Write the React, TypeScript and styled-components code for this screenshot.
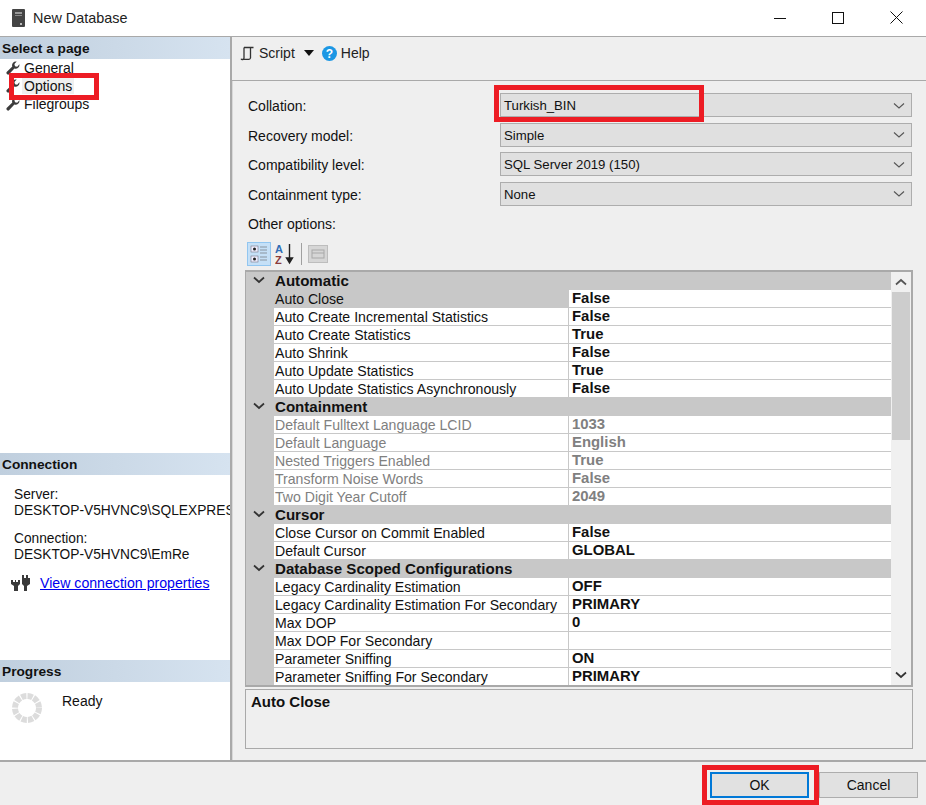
import React from "react";
import styled, { createGlobalStyle } from "styled-components";

const Global = createGlobalStyle`
  html, body { margin: 0; padding: 0; background: #fff; }
  body { font-family: "Liberation Sans", Arial, sans-serif; font-size: 14px; color: #111; }
  * { box-sizing: border-box; }
`;

const Window = styled.div`
  position: relative;
  width: 926px;
  height: 805px;
  display: flex;
  flex-direction: column;
  overflow: hidden;
`;
const TitleBar = styled.div`
  height: 37px;
  flex: none;
  display: flex;
  align-items: center;
  padding: 0 0 1px 12px;
  background: #fff;
  border-bottom: 1px solid #a9a9a9;
`;
const AppIcon = styled.svg`
  width: 13px;
  height: 18px;
  margin-right: 8px;
`;
const Title = styled.span`
  font-size: 14.4px;
  color: #222;
  flex: 1;
`;
const WinButtons = styled.div`
  display: flex;
  align-items: center;
  gap: 46px;
  padding-right: 23px;
`;
const Main = styled.div`
  flex: 1;
  display: flex;
  min-height: 0;
`;
const Side = styled.div`
  width: 232px;
  flex: none;
  display: flex;
  flex-direction: column;
  background: #fff;
  border-right: 2px solid #a9a9a9;
`;
const SideHead = styled.div`
  height: 22px;
  flex: none;
  padding: 4px 0 0 2px;
  font-weight: 700;
  font-size: 13.7px;
  line-height: 15px;
  color: #111;
  background: linear-gradient(90deg, #c0cfde, #d6e3f0);
`;
const PageList = styled.div`
  height: 394px;
  flex: none;
`;
const PageItem = styled.div`
  height: 18px;
  display: flex;
  align-items: center;
  padding-left: 6px;
  font-size: 14px;
`;
const PageIcon = styled.svg`
  width: 14px;
  height: 14px;
  margin-right: 2px;
  flex: none;
`;
const PageLabel = styled.span<{ $selected?: boolean }>`
  background: ${(p) => (p.$selected ? "#efefef" : "transparent")};
  padding: 0 2px;
  line-height: 16px;
`;
const ConnBody = styled.div`
  height: 185px;
  flex: none;
  padding: 12px 0 0 14px;
  font-size: 13.75px;
  line-height: 15.5px;
  white-space: nowrap;
  overflow: hidden;
`;
const ConnBlock = styled.div`
  margin-bottom: 13px;
`;
const ConnLink = styled.div`
  display: flex;
  align-items: center;
  margin: 3px 0 0 -3px;
  gap: 10px;
`;
const LinkText = styled.a`
  color: #0000ee;
  text-decoration: underline;
  font-size: 14.15px;
`;
const ProgressBody = styled.div`
  display: flex;
  padding: 11px 0 0 12px;
  gap: 20px;
`;
const ReadyText = styled.span`
  font-size: 14px;
  line-height: 16px;
`;
const Right = styled.div`
  flex: 1;
  display: flex;
  flex-direction: column;
  background: #efefef;
`;
const Toolbar = styled.div`
  height: 44px;
  flex: none;
  display: flex;
  align-items: flex-start;
  padding: 7px 0 0 8px;
  font-size: 14px;
  color: #222;
  border-bottom: 1px solid #a9a9a9;
  gap: 5px;
`;
const ToolItem = styled.span`
  height: 18px;
  line-height: 18px;
  display: flex;
  align-items: center;
`;
const Content = styled.div`
  flex: 1;
  padding: 12px 13px 0 12px;
  border-left: 1px solid #d8d8d8;
  display: flex;
  flex-direction: column;
`;
const FormRow = styled.div`
  height: 29.5px;
  flex: none;
  display: flex;
  align-items: flex-start;
  padding-left: 3px;
`;
const FormLabel = styled.label`
  width: 252px;
  flex: none;
  font-size: 14px;
  line-height: 26px;
  color: #111;
`;
const Combo = styled.div`
  width: 412px;
  height: 24px;
  flex: none;
  display: flex;
  align-items: center;
  justify-content: space-between;
  padding: 1px 6px 0 3px;
  background: #e0e0e0;
  border: 1px solid #adadad;
  font-size: 13.2px;
  color: #111;
`;
const OtherLabel = styled.div`
  font-size: 14px;
  line-height: 16px;
  padding: 5px 0 0 3px;
  height: 31px;
`;
const GridToolbar = styled.div`
  height: 24px;
  display: flex;
  align-items: center;
  gap: 2px;
  margin-bottom: 4px;
  padding-left: 2px;
`;
const GridBtn = styled.div<{ $active?: boolean }>`
  width: 24px;
  height: 24px;
  display: flex;
  align-items: center;
  justify-content: center;
  background: ${(p) => (p.$active ? "#c5e0f7" : "transparent")};
  border: 1px solid ${(p) => (p.$active ? "#92c6f0" : "transparent")};
`;
const GridSep = styled.div`
  width: 1px;
  height: 22px;
  background: #a0a0a0;
  margin: 0 2px;
`;
const Grid = styled.div`
  height: 417px;
  flex: none;
  width: 668px;
  display: flex;
  background: #fff;
  border-style: solid;
  border-width: 2px 2px 2px 1px;
  border-color: #a9a9a9;
  overflow: hidden;
`;
const GridList = styled.div`
  flex: 1;
  min-width: 0;
  overflow: hidden;
`;
const CatRow = styled.div`
  height: 18px;
  display: flex;
  align-items: center;
  padding-bottom: 2px;
  background: #c8c8c8;
  font-weight: 700;
  font-size: 15.1px;
  color: #111;
`;
const CatIcon = styled.span`
  width: 29px;
  flex: none;
  display: flex;
  align-items: center;
  justify-content: center;
  padding-right: 4px;
`;
const Row = styled.div`
  height: 18px;
  display: flex;
  background: #c8c8c8;
`;
const RowName = styled.div<{ $selected?: boolean; $disabled?: boolean }>`
  margin-left: 28px;
  width: 294px;
  flex: none;
  padding-left: 1px;
  font-size: 14.1px;
  line-height: 18px;
  white-space: nowrap;
  background: ${(p) => (p.$selected ? "#c8c8c8" : "#fff")};
  color: ${(p) => (p.$disabled ? "#808080" : "#111")};
  border-bottom: 1px solid #c8c8c8;
`;
const RowValue = styled.div<{ $disabled?: boolean }>`
  flex: 1;
  margin-left: 1px;
  padding-left: 3px;
  font-weight: 700;
  font-size: 14.9px;
  line-height: 16px;
  background: #fff;
  color: ${(p) => (p.$disabled ? "#808080" : "#111")};
  border-bottom: 1px solid #c8c8c8;
`;
const ScrollBar = styled.div`
  width: 20px;
  flex: none;
  display: flex;
  flex-direction: column;
  background: #f0f0f0;
`;
const ScrollBtn = styled.div`
  height: 20px;
  flex: none;
  display: flex;
  align-items: center;
  justify-content: center;
`;
const ScrollThumb = styled.div`
  height: 148px;
  flex: none;
  margin-left: 1px;
  margin-right: 1px;
  background: #cdcdcd;
`;
const ScrollGap = styled.div`
  flex: 1;
`;
const DescBox = styled.div`
  width: 668px;
  height: 60px;
  flex: none;
  margin-top: 2px;
  padding: 3px 5px;
  border: 1px solid #a9a9a9;
  font-weight: 700;
  font-size: 15px;
  color: #111;
`;
const Footer = styled.div`
  height: 45px;
  flex: none;
  display: flex;
  justify-content: flex-end;
  padding: 10px 8px 0 0;
  background: #efefef;
  border-top: 2px solid #a9a9a9;
`;
const DlgButton = styled.div<{ $primary?: boolean }>`
  width: 99px;
  height: 26px;
  display: flex;
  align-items: center;
  justify-content: center;
  background: #e1e1e1;
  border: ${(p) => (p.$primary ? "2px solid #0078d7" : "1px solid #adadad")};
  font-size: 14px;
  color: #111;
  margin-left: ${(p) => (p.$primary ? "0" : "10px")};
`;
const RedBox = styled.div<{ $x: number; $y: number; $w: number; $h: number }>`
  position: absolute;
  left: ${(p) => p.$x}px;
  top: ${(p) => p.$y}px;
  width: ${(p) => p.$w}px;
  height: ${(p) => p.$h}px;
  border: 5px solid #ed1c24;
  pointer-events: none;
`;

const Chevron = () => (
  <svg width="12" height="8" viewBox="0 0 12 8">
    <path d="M1 1.5 L6 6 L11 1.5" fill="none" stroke="#555" strokeWidth="1.1" />
  </svg>
);
const CatChevron = () => (
  <svg width="12" height="8" viewBox="0 0 12 8">
    <path d="M1 1.5 L6 6 L11 1.5" fill="none" stroke="#333" strokeWidth="1.7" />
  </svg>
);
const Wrench = () => (
  <PageIcon viewBox="0 0 14 14">
    <path
      d="M13.4 3.2a3.8 3.8 0 0 1-5 4.3L3.3 13a1.6 1.6 0 0 1-2.4-2.2l5.4-5.2A3.8 3.8 0 0 1 10.7.6L8.4 3l.6 2.2 2.2.5z"
      fill="#3c3c3c"
    />
  </PageIcon>
);

type R = { n: string; v: string; d?: boolean; s?: boolean };
type Sec = { t: string; rows: R[] };
const sections: Sec[] = [
  {
    t: "Automatic",
    rows: [
      { n: "Auto Close", v: "False", s: true },
      { n: "Auto Create Incremental Statistics", v: "False" },
      { n: "Auto Create Statistics", v: "True" },
      { n: "Auto Shrink", v: "False" },
      { n: "Auto Update Statistics", v: "True" },
      { n: "Auto Update Statistics Asynchronously", v: "False" },
    ],
  },
  {
    t: "Containment",
    rows: [
      { n: "Default Fulltext Language LCID", v: "1033", d: true },
      { n: "Default Language", v: "English", d: true },
      { n: "Nested Triggers Enabled", v: "True", d: true },
      { n: "Transform Noise Words", v: "False", d: true },
      { n: "Two Digit Year Cutoff", v: "2049", d: true },
    ],
  },
  {
    t: "Cursor",
    rows: [
      { n: "Close Cursor on Commit Enabled", v: "False" },
      { n: "Default Cursor", v: "GLOBAL" },
    ],
  },
  {
    t: "Database Scoped Configurations",
    rows: [
      { n: "Legacy Cardinality Estimation", v: "OFF" },
      { n: "Legacy Cardinality Estimation For Secondary", v: "PRIMARY" },
      { n: "Max DOP", v: "0" },
      { n: "Max DOP For Secondary", v: "" },
      { n: "Parameter Sniffing", v: "ON" },
      { n: "Parameter Sniffing For Secondary", v: "PRIMARY" },
    ],
  },
];
const combos = [
  ["Collation:", "Turkish_BIN"],
  ["Recovery model:", "Simple"],
  ["Compatibility level:", "SQL Server 2019 (150)"],
  ["Containment type:", "None"],
];

export default function App() {
  return (
    <Window>
      <Global />
      <TitleBar>
        <AppIcon viewBox="0 0 13 18">
          <rect x="0" y="0" width="13" height="18" rx="1" fill="#444" />
          <rect x="3" y="3" width="7" height="2" fill="#999" />
          <rect x="3" y="6" width="7" height="1" fill="#888" />
          <rect x="8" y="14" width="2" height="2" fill="#bbb" />
        </AppIcon>
        <Title>New Database</Title>
        <WinButtons>
          <svg width="12" height="12" viewBox="0 0 12 12">
            <path d="M0 6.5H12" stroke="#111" strokeWidth="1" />
          </svg>
          <svg width="12" height="12" viewBox="0 0 12 12">
            <rect x=".5" y=".5" width="11" height="11" fill="none" stroke="#111" />
          </svg>
          <svg width="13" height="13" viewBox="0 0 13 13">
            <path d="M.5.5l12 12M12.5.5l-12 12" stroke="#111" strokeWidth="1" />
          </svg>
        </WinButtons>
      </TitleBar>
      <Main>
        <Side>
          <SideHead>Select a page</SideHead>
          <PageList>
            <PageItem>
              <Wrench />
              <PageLabel>General</PageLabel>
            </PageItem>
            <PageItem>
              <Wrench />
              <PageLabel $selected>Options</PageLabel>
            </PageItem>
            <PageItem>
              <Wrench />
              <PageLabel>Filegroups</PageLabel>
            </PageItem>
          </PageList>
          <SideHead>Connection</SideHead>
          <ConnBody>
            <ConnBlock>
              Server:
              <br />
              DESKTOP-V5HVNC9\SQLEXPRESS
            </ConnBlock>
            <ConnBlock>
              Connection:
              <br />
              DESKTOP-V5HVNC9\EmRe
            </ConnBlock>
            <ConnLink>
              <svg width="19" height="18" viewBox="0 0 19 18">
                <path
                  d="M0 5h2v2h2V5h1v2h2V5h2v4l-2 2v5H3v-5L0 9zM11 0h2v3h2V0h2v3h2v6l-3 2v5h-3v-5l-2-2z"
                  fill="#3a3a3a"
                />
              </svg>
              <LinkText>View connection properties</LinkText>
            </ConnLink>
          </ConnBody>
          <SideHead>Progress</SideHead>
          <ProgressBody>
            <svg width="30" height="30" viewBox="0 0 30 30">
              <circle
                cx="15"
                cy="15"
                r="12"
                fill="none"
                stroke="#dcdcdc"
                strokeWidth="6"
                strokeDasharray="5.2 1.1"
              />
            </svg>
            <ReadyText>Ready</ReadyText>
          </ProgressBody>
        </Side>
        <Right>
          <Toolbar>
            <ToolItem>
              <svg width="15" height="15" viewBox="0 0 15 15" style={{ marginRight: 4 }}>
                <path
                  d="M4 1.5h9.5M4 1.5v10.5a1.6 1.6 0 0 1-3 .8M1 13.3h8a1.6 1.6 0 0 0 1.5-1.3V1.5"
                  fill="none"
                  stroke="#333"
                  strokeWidth="1.3"
                />
              </svg>
              Script
            </ToolItem>
            <ToolItem>
              <svg width="10" height="6" viewBox="0 0 10 6" style={{ margin: "0 0 0 4px" }}>
                <path d="M0 0h10L5 6z" fill="#111" />
              </svg>
            </ToolItem>
            <ToolItem>
              <svg width="15" height="15" viewBox="0 0 15 15" style={{ marginLeft: 3, marginRight: 4 }}>
                <circle cx="7.5" cy="7.5" r="7.5" fill="#1c97e4" />
                <text x="7.5" y="12" textAnchor="middle" fontSize="12" fontWeight="700" fill="#fff" fontFamily="Liberation Sans">
                  ?
                </text>
              </svg>
              Help
            </ToolItem>
          </Toolbar>
          <Content>
            {combos.map(([l, v]) => (
              <FormRow key={l}>
                <FormLabel>{l}</FormLabel>
                <Combo>
                  {v}
                  <Chevron />
                </Combo>
              </FormRow>
            ))}
            <OtherLabel>Other options:</OtherLabel>
            <GridToolbar>
              <GridBtn $active>
                <svg width="18" height="20" viewBox="0 0 18 20">
                  <rect x="1" y="2" width="7" height="6" fill="#eef" stroke="#778" strokeWidth=".6" />
                  <circle cx="4.5" cy="5" r="1.5" fill="#222" />
                  <rect x="1" y="12" width="7" height="6" fill="#eef" stroke="#778" strokeWidth=".6" />
                  <circle cx="4.5" cy="15" r="1.5" fill="#222" />
                  <path d="M10 3h7M10 6h7M10 9h7M10 13h7M10 16h7" stroke="#8a94a0" strokeWidth="1.2" />
                </svg>
              </GridBtn>
              <GridBtn>
                <svg width="20" height="22" viewBox="0 0 20 22">
                  <text x="0" y="10" fontSize="11" fontWeight="700" fill="#2f6db5" fontFamily="Liberation Sans">A</text>
                  <text x="0" y="21" fontSize="11" fontWeight="700" fill="#8a3a3a" fontFamily="Liberation Sans">Z</text>
                  <path d="M14.5 1v17M11.5 15l3 5 3-5z" stroke="#222" strokeWidth="1.4" fill="#222" />
                </svg>
              </GridBtn>
              <GridSep />
              <GridBtn>
                <svg width="20" height="18" viewBox="0 0 20 18">
                  <rect x=".5" y=".5" width="19" height="17" fill="#d6d6d6" stroke="#bdbdbd" />
                  <rect x="4" y="5" width="12" height="8" fill="none" stroke="#a8a8a8" />
                  <path d="M4 8h12" stroke="#a8a8a8" />
                </svg>
              </GridBtn>
            </GridToolbar>
            <Grid>
              <GridList>
                {sections.map((s) => (
                  <React.Fragment key={s.t}>
                    <CatRow>
                      <CatIcon>
                        <CatChevron />
                      </CatIcon>
                      {s.t}
                    </CatRow>
                    {s.rows.map((r) => (
                      <Row key={r.n}>
                        <RowName $selected={r.s} $disabled={r.d}>
                          {r.n}
                        </RowName>
                        <RowValue $disabled={r.d}>{r.v}</RowValue>
                      </Row>
                    ))}
                  </React.Fragment>
                ))}
              </GridList>
              <ScrollBar>
                <ScrollBtn>
                  <svg width="12" height="8" viewBox="0 0 12 8">
                    <path d="M1 6.5 L6 2 L11 6.5" fill="none" stroke="#555" strokeWidth="1.7" />
                  </svg>
                </ScrollBtn>
                <ScrollThumb />
                <ScrollGap />
                <ScrollBtn>
                  <CatChevron />
                </ScrollBtn>
              </ScrollBar>
            </Grid>
            <DescBox>Auto Close</DescBox>
          </Content>
        </Right>
      </Main>
      <Footer>
        <DlgButton $primary>OK</DlgButton>
        <DlgButton>Cancel</DlgButton>
      </Footer>
      <RedBox $x={9} $y={73} $w={90} $h={27} />
      <RedBox $x={494} $y={85} $w={210} $h={37} />
      <RedBox $x={702} $y={765} $w={117} $h={40} />
    </Window>
  );
}
